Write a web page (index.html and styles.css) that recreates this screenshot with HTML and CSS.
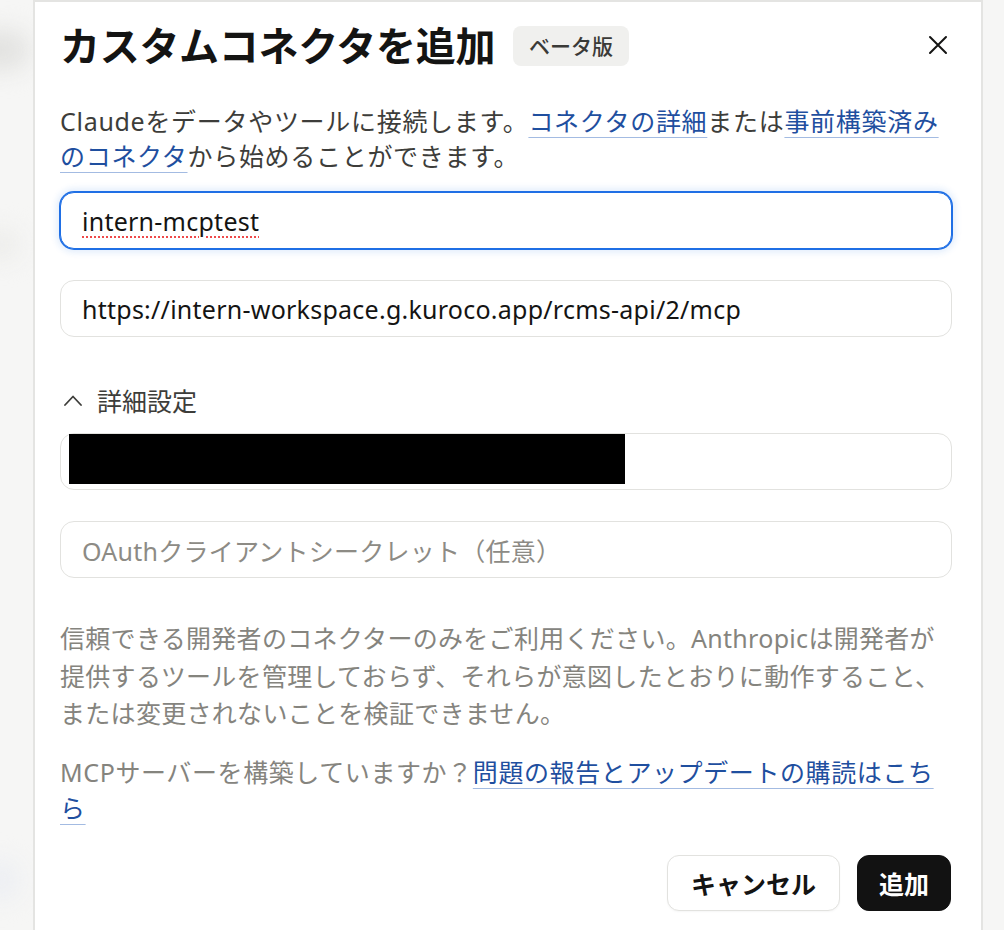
FILE: index.html
```html
<!DOCTYPE html>
<html lang="ja">
<head>
    <meta charset="UTF-8">
    <meta name="viewport" content="width=device-width, initial-scale=1.0">
    <title>カスタムコネクタを追加</title>
    <link rel="stylesheet" href="styles.css">
</head>
<body>
    <div class="page-behind">
        <span class="blur-blob blob-a"></span>
        <span class="blur-blob blob-b"></span>
        <span class="blur-blob blob-c"></span>
    </div>

    <div class="dialog" role="dialog" aria-labelledby="dialog-title">
        <div class="dialog-header">
            <h2 class="dialog-title" id="dialog-title">カスタムコネクタを追加</h2>
            <span class="badge">ベータ版</span>
            <button class="close-btn" aria-label="閉じる">
                <svg width="20" height="20" viewBox="0 0 20 20" fill="none" stroke="#141413" stroke-width="2" stroke-linecap="round">
                    <path d="M2 2L18 18M18 2L2 18"/>
                </svg>
            </button>
        </div>

        <p class="intro">Claudeをデータやツールに接続します。<a href="#">コネクタの詳細</a>または<a href="#">事前構築済みのコネクタ</a>から始めることができます。</p>

        <div class="field field-focus">
            <span class="misspelled">intern-mcptest</span>
        </div>
        <div class="field field-gap">
            <span>https://intern-workspace.g.kuroco.app/rcms-api/2/mcp</span>
        </div>

        <div class="advanced-toggle">
            <svg width="18" height="11" viewBox="0 0 18 11" fill="none" stroke="#3d3d3a" stroke-width="1.8" stroke-linecap="round" stroke-linejoin="round">
                <path d="M1 10L9 1.5L17 10"/>
            </svg>
            <span>詳細設定</span>
        </div>

        <div class="field field-redacted">
            <span class="redacted"></span>
        </div>
        <div class="field field-gap">
            <span class="placeholder">OAuthクライアントシークレット（任意）</span>
        </div>

        <p class="notice">信頼できる開発者のコネクターのみをご利用ください。Anthropicは開発者が提供するツールを管理しておらず、それらが意図したとおりに動作すること、または変更されないことを検証できません。</p>
        <p class="notice notice-second">MCPサーバーを構築していますか？<a href="#">問題の報告とアップデートの購読はこちら</a></p>

        <div class="dialog-actions">
            <button class="btn btn-secondary">キャンセル</button>
            <button class="btn btn-primary">追加</button>
        </div>
    </div>
</body>
</html>
```

FILE: styles.css
```css
* {
    margin: 0;
    padding: 0;
    box-sizing: border-box;
}

body {
    font-family: "Noto Sans", "Noto Sans CJK JP", sans-serif;
    background: #f6f6f5;
    height: 930px;
    overflow: hidden;
    position: relative;
}

/* blurred app content peeking out around the modal */
.page-behind {
    position: absolute;
    inset: 0;
    z-index: 0;
}

.blur-blob {
    position: absolute;
    border-radius: 20px;
    background: #e2e2e0;
    filter: blur(12px);
}

.blob-a {
    left: -30px;
    top: 30px;
    width: 60px;
    height: 40px;
}

.blob-b {
    left: -20px;
    top: 230px;
    width: 40px;
    height: 30px;
    background: #ececea;
}

.blob-c {
    left: -20px;
    top: 860px;
    width: 40px;
    height: 40px;
    background: #eceef3;
}

.dialog {
    position: relative;
    z-index: 1;
    width: 950px;
    min-height: 940px;
    margin-left: 33px;
    background: #ffffff;
    border: 2px solid #e4e4e2;
    border-bottom: none;
    padding: 18px 29px 0 25px;
}

.dialog-header {
    display: flex;
    align-items: center;
    height: 52px;
}

.dialog-title {
    font-size: 40px;
    line-height: 52px;
    font-weight: 700;
    color: #141413;
    letter-spacing: -0.3px;
}

.badge {
    margin-left: 18px;
    height: 40px;
    padding: 0 16px;
    font-size: 21px;
    line-height: 40px;
    font-weight: 500;
    color: #3a3a37;
    background: #f0f0ee;
    border-radius: 8px;
}

.close-btn {
    margin-left: auto;
    margin-top: -3px;
    width: 28px;
    height: 28px;
    display: flex;
    align-items: center;
    justify-content: center;
    background: none;
    border: none;
    cursor: pointer;
}

.intro {
    margin-top: 32px;
    font-size: 25px;
    line-height: 35px;
    letter-spacing: 0.7px;
    color: #3d3d3a;
}

a {
    color: #1f4f9f;
    text-decoration: underline;
    text-decoration-color: #a3bbe2;
    text-decoration-thickness: 1px;
    text-underline-offset: 6px;
}

.field {
    height: 57px;
    margin-top: 18px;
    display: flex;
    align-items: center;
    padding: 0 21px;
    border: 1px solid #e2e2df;
    border-radius: 14px;
    font-size: 25px;
    letter-spacing: 0.25px;
    color: #141413;
    background: #ffffff;
}

.field-gap {
    margin-top: 31px;
}

.field-focus {
    border-color: #1f6fe5;
    box-shadow: 0 0 0 1px #1f6fe5, 0 0 7px 3px rgba(31, 111, 229, 0.14);
}

.misspelled {
    text-decoration: underline dotted #ef4a4a;
    text-decoration-thickness: 2px;
    text-underline-offset: 6px;
}

.placeholder {
    color: #8d8b85;
}

.advanced-toggle {
    margin-top: 45px;
    height: 36px;
    display: flex;
    align-items: center;
    gap: 15px;
    padding-left: 4px;
    font-size: 25px;
    color: #3d3d3a;
    cursor: pointer;
}

.field-redacted {
    margin-top: 15px;
    align-items: flex-start;
    padding: 0 0 0 8px;
}

.redacted {
    display: block;
    width: 556px;
    height: 50px;
    background: #000000;
}

.notice {
    margin-top: 42px;
    font-size: 25px;
    line-height: 37.5px;
    letter-spacing: 0.3px;
    color: #85847e;
}

.notice-second {
    margin-top: 21px;
    line-height: 36px;
    letter-spacing: 0.6px;
}

.dialog-actions {
    margin-top: 29px;
    display: flex;
    justify-content: flex-end;
    gap: 17px;
    padding-right: 1px;
}

.btn {
    height: 56px;
    border-radius: 12px;
    font-family: inherit;
    font-size: 25px;
    font-weight: 700;
    cursor: pointer;
}

.btn-secondary {
    padding: 0 23px;
    background: #ffffff;
    color: #141413;
    border: 1px solid #e2e2df;
    box-shadow: 0 1px 2px rgba(0, 0, 0, 0.04);
}

.btn-primary {
    padding: 0 21px;
    background: #121212;
    color: #ffffff;
    border: 1px solid #121212;
}
```
